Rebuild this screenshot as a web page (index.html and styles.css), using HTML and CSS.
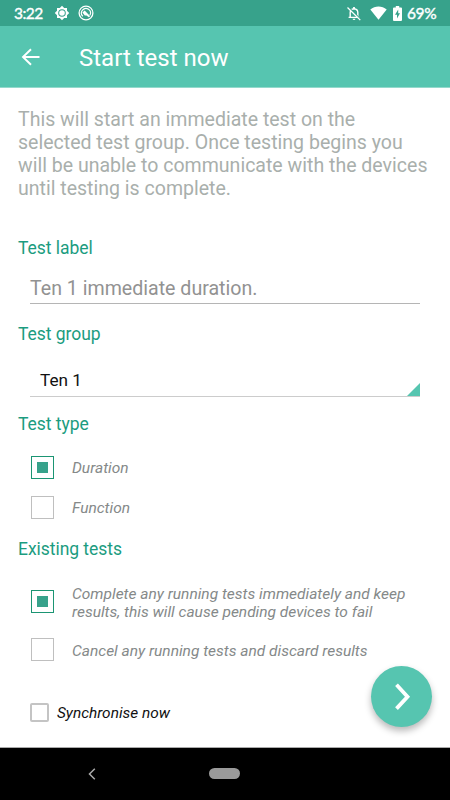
FILE: index.html
```html
<!DOCTYPE html>
<html lang="en">
<head>
<meta charset="utf-8">
<title>Start test now</title>
<link rel="stylesheet" href="styles.css">
</head>
<body>
<div class="screen">
  <div class="status">
    <span class="time">3:22</span>
    <svg class="gear" width="16" height="16" viewBox="0 0 16 16"><path fill="#fff" fill-rule="evenodd" d="M8 .8 10.200 3h2.800v2.800L15.200 8 13 10.200V13h-2.800L8 15.200 5.800 13H3v-2.800L.8 8 3 5.800V3h2.800zM8 4.200a3.800 3.800 0 1 0 0 7.600 3.800 3.800 0 0 0 0-7.600z"/><circle cx="8" cy="8" r="2.800" fill="#fff"/></svg>
    <svg class="disc" width="16" height="16" viewBox="0 0 16 16"><circle cx="8" cy="8" r="6.900" fill="none" stroke="#fff" stroke-width="1.300"/><path d="M4.800 11.200A4.500 4.500 0 1 1 11.900 10.200" fill="none" stroke="#fff" stroke-width="1.200"/><path d="M4.400 7.500 6.700 5.400 12.200 11.300 10.800 12.200 8.500 10.600 6.800 10.400z" fill="#fff"/></svg>
    <span class="spacer"></span>
    <svg class="bell" width="14" height="15" viewBox="0 0 14 15"><path d="M3.200 11V6.600C3.200 4.400 4.600 3 7 2.800c2.400.2 3.800 1.600 3.800 3.800V11M1.600 11.400H12.400" fill="none" stroke="#fff" stroke-width="1.400"/><path d="M7 1v2" stroke="#fff" stroke-width="1.800"/><path d="M5.600 12.700h2.800a1.400 1.400 0 0 1-2.800 0z" fill="#fff"/><path d="m1.300.9 12.500 12.500" stroke="#37a28b" stroke-width="1.300"/><path d="m.5 1.500 12.800 12.600" stroke="#fff" stroke-width="1.300"/></svg>
    <svg class="wifi" width="17" height="14" viewBox="0 0 17 14"><path d="M.3 3.500C5-.6 12-.6 16.700 3.500L8.500 13.700z" fill="#fff"/></svg>
    <svg class="battery" width="9" height="15" viewBox="0 0 9 15"><path d="M2.800 0h3.400v1.500h1.800q1 0 1 1V14q0 1-1 1H1q-1 0-1-1V2.500q0-1 1-1h1.800z" fill="#fff"/><path d="M5.200 3.400 2 8.700h2v3.800l3-5.300H5.200z" fill="#37a28b"/></svg>
    <span class="percent">69%</span>
  </div>
  <header class="appbar">
    <svg width="20" height="18" viewBox="0 0 20 18"><path d="M18.500 9H2M10 1.200 2 9l8 7.800" fill="none" stroke="#fff" stroke-width="1.900"/></svg>
    <h1>Start test now</h1>
  </header>
  <main class="content">
    <p class="intro">This will start an immediate test on the<br>selected test group. Once testing begins you<br>will be unable to communicate with the devices<br>until testing is complete.</p>
    <h2 class="label-title">Test label</h2>
    <div class="field">Ten 1 immediate duration.</div>
    <h2 class="group-title">Test group</h2>
    <div class="select"><span>Ten 1</span><svg width="13" height="13" viewBox="0 0 13 13"><path d="M13 0v13H0z" fill="#56c5b0"/></svg></div>
    <h2 class="type-title">Test type</h2>
    <div class="option duration"><span class="box checked"></span><span>Duration</span></div>
    <div class="option function"><span class="box"></span><span>Function</span></div>
    <h2 class="existing-title">Existing tests</h2>
    <div class="option complete"><span class="box checked"></span><span>Complete any running tests immediately and keep<br>results, this will cause pending devices to fail</span></div>
    <div class="option cancel"><span class="box"></span><span>Cancel any running tests and discard results</span></div>
    <div class="sync"><span class="checkbox"></span><span class="sync-text">Synchronise now</span></div>
    <div class="fab"><svg width="61" height="61" viewBox="0 0 61 61"><path d="m25.500 18.800 11 11.900-11 11.900" fill="none" stroke="#fff" stroke-width="3.800"/></svg></div>
  </main>
  <nav class="navbar">
    <svg width="8" height="12" viewBox="0 0 8 12"><path d="M6.800.8 1.500 6l5.300 5.200" fill="none" stroke="#aaa" stroke-width="1.500"/></svg>
    <span class="pill"></span>
  </nav>
</div>
</body>
</html>
```
FILE: styles.css
```css
* { box-sizing: border-box; }
body { margin: 0; background: #fff; font-family: Roboto, "Liberation Sans", sans-serif; }
.screen { width: 450px; height: 800px; display: flex; flex-direction: column; overflow: hidden; }
svg { display: block; flex: none; }

.status { height: 26px; flex: none; background: #37a28b; color: #fff; display: flex; align-items: center; padding: 0 13px 0 14px; font-family: Lato, Roboto, sans-serif; font-size: 15.5px; font-weight: 400; -webkit-text-stroke: .4px #fff; white-space: nowrap; }
.time { width: 40px; letter-spacing: -.5px; }
.gear { margin-right: 8px; }
.spacer { flex: 1; }
.bell { margin-right: 9px; }
.wifi { margin-right: 6px; margin-bottom: 1px; }
.battery { margin-right: 5px; }
.percent { width: 30px; letter-spacing: -.4px; }

.appbar { height: 62px; flex: none; background: #56c5b0; border-bottom: 1px solid #94d9cc; color: #fff; display: flex; align-items: center; padding: 1px 0 0 21px; }
.appbar h1 { margin: 2px 0 0 38px; font-size: 24px; font-weight: 400; line-height: 30px; white-space: nowrap; }

.content { flex: 1; position: relative; padding: 20px 30px 0 18px; white-space: nowrap; }
.intro { margin: 0; font-size: 19.55px; line-height: 23px; color: #a9afac; }
h2 { margin: 0; font-size: 17.5px; font-weight: 400; line-height: 22px; letter-spacing: -.04px; color: #1b9c80; }
.label-title { margin-top: 37px; }
.field { margin: 15px 0 0 12px; height: 30px; border-bottom: 1px solid #b5b5b5; font-size: 19.6px; line-height: 29px; color: #929292; }
.group-title { margin-top: 19px; }
.select { margin: 21px 0 0 12px; height: 31px; padding-left: 10px; border-bottom: 1px solid #ccc; display: flex; align-items: flex-end; justify-content: space-between; font-size: 17.2px; line-height: 32px; color: #111; }
.type-title { margin-top: 16px; }
.option { display: flex; align-items: center; gap: 18px; margin-left: 13px; font-size: 15.5px; font-style: italic; line-height: 18px; color: #858989; }
.box { width: 23px; height: 23px; flex: none; border: 1px solid #bfbfbf; display: flex; align-items: center; justify-content: center; }
.checked { border-color: #1b9573; }
.checked::after { content: ""; width: 11px; height: 11px; background: #37a28b; }
.duration { margin-top: 21px; }
.function { margin-top: 17px; }
.existing-title { margin-top: 19px; }
.complete { margin-top: 25px; align-items: flex-start; }
.complete .box { margin-top: 5px; }
.cancel { margin-top: 17px; }
.cancel span:last-child { padding-top: 2px; }
.sync { display: flex; align-items: center; gap: 8px; margin: 42px 0 0 12px; height: 19px; font-size: 15.4px; font-style: italic; line-height: 19px; color: #111; }
.sync-text { padding-top: 2px; }
.checkbox { width: 19px; height: 19px; border: 2px solid #c4c4c4; border-radius: 2px; }
.fab { position: absolute; right: 18px; bottom: 20px; width: 61px; height: 61px; border-radius: 50%; background: #56c5b0; box-shadow: 0 4px 7px rgba(0, 0, 0, .28); }

.navbar { height: 53px; flex: none; background: #000; border-top: 1px solid #aaa; display: flex; align-items: center; padding: 0 0 1px 88px; }
.pill { width: 31px; height: 11px; margin-left: 113px; border-radius: 6px; background: #9a9a9a; }
```
